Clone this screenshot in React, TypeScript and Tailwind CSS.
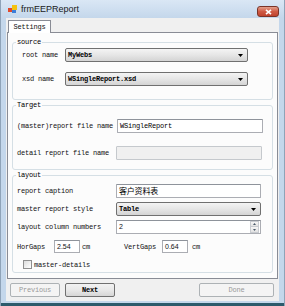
import React from 'react'

const mono = "font-['Liberation_Mono','Noto_Sans_CJK_SC',monospace]"

function Combo({ value, width }: { value: string; width: string }) {
  return (
    <div
      className={`${width} h-[14px] flex items-center justify-between rounded-[2px] border border-[#707070] bg-gradient-to-b from-[#f4f4f4] via-[#e6e6e6] to-[#d4d4d4] pl-[2px] pr-[4px]`}
    >
      <span className="text-[7px] leading-[8px] font-bold text-black">{value}</span>
      <svg width="5" height="3" viewBox="0 0 5 3">
        <path d="M0 0h5L2.5 3z" fill="#000" />
      </svg>
    </div>
  )
}

function TextBox({ value, width, disabled, cjk }: { value?: string; width: string; disabled?: boolean; cjk?: boolean }) {
  return (
    <div
      className={`${width} h-[14px] flex items-center rounded-[1px] border pl-[2px] ${
        disabled ? 'bg-[#f0f0f0] border-[#c5c9cd]' : 'bg-white border-[#abadb3] border-t-[#8e939b]'
      }`}
    >
      {cjk ? (
        <span className="font-['Noto_Sans_CJK_SC',sans-serif] text-[8px] leading-[10px] text-black">{value}</span>
      ) : (
        <span className="text-[7px] leading-[8px] text-black">{value}</span>
      )}
    </div>
  )
}

function Group({ title, children, className }: { title: string; children: React.ReactNode; className: string }) {
  return (
    <fieldset className={`${className} rounded-[3px] border border-[#d5dfe5]`}>
      <legend className="ml-[3px] px-[1px] text-[7px] leading-[8px] text-black">{title}</legend>
      {children}
    </fieldset>
  )
}

export default function App() {
  return (
    <div
      className={`w-[285px] h-[306px] flex flex-col bg-[#c4d7eb] border-l border-r border-[#8fa3b8] ${mono} tracking-[-0.2px] whitespace-nowrap overflow-hidden text-[#111]`}
    >
      {/* Title bar */}
      <div className="h-[18px] flex items-center bg-gradient-to-b from-[#dae7f5] to-[#c4d7eb] pl-[7px] pr-[5px]">
        <svg width="9" height="9" viewBox="0 0 9 9">
          <rect x="0" y="3" width="4" height="4" fill="#e14a2c" />
          <rect x="4" y="0" width="5" height="5" fill="#f4c20d" />
          <rect x="4" y="5" width="4" height="3" fill="#3b7dd8" />
        </svg>
        <span className="ml-[4px] font-['Liberation_Sans',sans-serif] tracking-normal text-[9px] leading-[10px] text-[#1a1a1a]">
          frmEEPReport
        </span>
        <div className="ml-auto mt-[5px] w-[22px] h-[11px] flex items-center justify-center rounded-[3px] border border-[#7a3428] bg-gradient-to-b from-[#e3a08c] via-[#cf5a44] to-[#c0432d]">
          <svg width="7" height="6" viewBox="0 0 7 6">
            <path d="M1 0.8L6 5.2M6 0.8L1 5.2" stroke="#fff" strokeWidth="1.6" />
          </svg>
        </div>
      </div>

      {/* Client area */}
      <div className="mx-[5px] h-[283px] flex flex-col bg-[#f0f0f0] pt-[2px]">
        <div className="flex pl-[2px]">
          <div className="relative z-10 -mb-[1px] h-[13px] w-[43px] flex items-center justify-center border border-b-0 border-[#898c95] bg-white text-[7px] leading-[8px]">
            Settings
          </div>
        </div>
        <div className="mx-[1px] h-[247px] flex flex-col border border-[#898c95] bg-[#fcfcfc] px-[4px] pt-[5px]">
          <Group title="source" className="h-[62px]">
            <div className="flex flex-col gap-[10px] pt-[2px] pl-[9px]">
              <div className="flex items-center">
                <span className="w-[43px] text-[7px] leading-[8px]">root name</span>
                <Combo value="MyWebs" width="w-[183px]" />
              </div>
              <div className="flex items-center">
                <span className="w-[43px] text-[7px] leading-[8px]">xsd name</span>
                <Combo value="WSingleReport.xsd" width="w-[183px]" />
              </div>
            </div>
          </Group>

          <Group title="Target" className="mt-[1px] h-[69px]">
            <div className="flex flex-col gap-[13px] pt-[10px] pl-[4px]">
              <div className="flex items-center">
                <span className="w-[100px] text-[7px] leading-[8px]">(master)report file name</span>
                <TextBox value="WSingleReport" width="w-[146px]" />
              </div>
              <div className="flex items-center">
                <span className="w-[99px] text-[7px] leading-[8px]">detail report file name</span>
                <TextBox width="w-[146px]" disabled />
              </div>
            </div>
          </Group>

          <Group title="layout" className="mt-[1px] h-[102px]">
            <div className="flex flex-col pt-[5px] pl-[4px]">
              <div className="flex items-center">
                <span className="w-[99px] text-[7px] leading-[8px]">report caption</span>
                <TextBox value="客户资料表" width="w-[145px]" cjk />
              </div>
              <div className="mt-[4px] flex items-center">
                <span className="w-[99px] text-[7px] leading-[8px]">master report style</span>
                <Combo value="Table" width="w-[145px]" />
              </div>
              <div className="mt-[4px] flex items-center">
                <span className="w-[99px] text-[7px] leading-[8px]">layout column numbers</span>
                <div className="w-[145px] h-[14px] flex items-center border border-[#abadb3] border-t-[#8e939b] bg-white pl-[2px]">
                  <span className="font-['Liberation_Sans',sans-serif] text-[7px] leading-[8px]">2</span>
                  <div className="ml-auto mr-[1px] w-[9px] h-[12px] flex flex-col">
                    <div className="h-[6px] flex items-center justify-center border border-[#c8cbd0] bg-gradient-to-b from-[#f6f6f6] to-[#e2e2e2]">
                      <svg width="3" height="2" viewBox="0 0 3 2">
                        <path d="M0 2h3L1.5 0z" fill="#4a5a6a" />
                      </svg>
                    </div>
                    <div className="h-[6px] flex items-center justify-center border border-t-0 border-[#c8cbd0] bg-gradient-to-b from-[#f6f6f6] to-[#e2e2e2]">
                      <svg width="3" height="2" viewBox="0 0 3 2">
                        <path d="M0 0h3L1.5 2z" fill="#4a5a6a" />
                      </svg>
                    </div>
                  </div>
                </div>
              </div>
              <div className="mt-[6px] flex items-center">
                <span className="w-[37px] text-[7px] leading-[8px]">HorGaps</span>
                <div className="w-[26px] h-[13px] flex items-center border border-[#abadb3] border-t-[#8e939b] bg-white pl-[2px]">
                  <span className="font-['Liberation_Sans',sans-serif] tracking-normal text-[7px] leading-[8px]">2.54</span>
                </div>
                <span className="ml-[2px] w-[42px] text-[7px] leading-[8px]">cm</span>
                <span className="w-[38px] text-[7px] leading-[8px]">VertGaps</span>
                <div className="w-[26px] h-[13px] flex items-center border border-[#abadb3] border-t-[#8e939b] bg-white pl-[2px]">
                  <span className="font-['Liberation_Sans',sans-serif] tracking-normal text-[7px] leading-[8px]">0.64</span>
                </div>
                <span className="ml-[4px] text-[7px] leading-[8px]">cm</span>
              </div>
              <div className="mt-[7px] flex items-center pl-[6px]">
                <div className="w-[9px] h-[9px] border border-[#8f8f8f] bg-gradient-to-br from-[#dcdcdc] to-[#ffffff]" />
                <span className="ml-[2px] text-[7px] leading-[8px]">master-details</span>
              </div>
            </div>
          </Group>
        </div>

        {/* Buttons */}
        <div className="mt-[4px] flex items-center pl-[4px] pr-[5px]">
          <div className="w-[50px] h-[14px] flex items-center justify-center rounded-[2px] border border-[#adb2b5] bg-[#f4f4f4] text-[7px] leading-[8px] text-[#9a9a9a]">
            Previous
          </div>
          <div className="ml-[5px] w-[50px] h-[14px] flex items-center justify-center rounded-[2px] border border-[#707070] bg-gradient-to-b from-[#f2f2f2] via-[#e8e8e8] to-[#d6d6d6] text-[7px] leading-[8px] font-bold text-black">
            Next
          </div>
          <div className="ml-auto w-[75px] h-[14px] flex items-center justify-center rounded-[2px] border border-[#adb2b5] bg-[#f4f4f4] text-[7px] leading-[8px] text-[#9a9a9a]">
            Done
          </div>
        </div>
      </div>

      <div className="h-[2px]" />
      <div className="h-[3px] bg-[#2c5a6b]" />
    </div>
  )
}
